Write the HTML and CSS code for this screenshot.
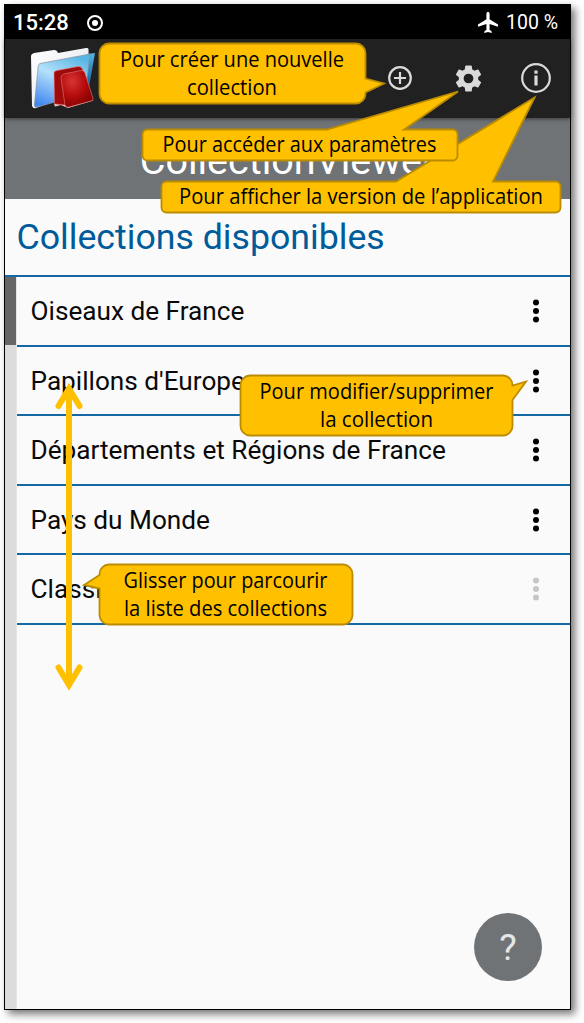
FILE: index.html
```html
<!DOCTYPE html>
<html lang="fr">
<head>
<meta charset="utf-8">
<title>CollectionViewer</title>
<link rel="stylesheet" href="styles.css">
</head>
<body>
<main class="phone">
  <header class="status">
    <span class="clock">15:28</span>
    <svg class="record" width="18" height="18" viewBox="0 0 18 18"><circle cx="9" cy="9" r="7" fill="none" stroke="#fff" stroke-width="2"/><circle cx="9" cy="9" r="3" fill="#fff"/></svg>
    <svg class="plane" width="20" height="21" viewBox="2 2 19 20" preserveAspectRatio="none"><path fill="#fff" d="M21 16v-2l-8-5V3.500c0-.83-.67-1.500-1.500-1.500S10 2.670 10 3.500V9l-8 5v2l8-2.500V19l-2 1.500V22l3.500-1 3.500 1v-1.500L13 19v-5.500z"/></svg>
    <span class="battery">100 %</span>
  </header>
  <nav class="appbar">
    <svg class="logo" width="66" height="64" viewBox="30 45 66 64">
      <defs>
        <linearGradient id="paper" x1="0" y1="0" x2="1" y2="1"><stop offset="0" stop-color="#fff"/><stop offset="1" stop-color="#dde3ea"/></linearGradient>
        <linearGradient id="folder" x1=".7" y1="0" x2=".2" y2="1"><stop offset="0" stop-color="#58b5e4"/><stop offset=".45" stop-color="#b5e1fa"/><stop offset="1" stop-color="#4388f0"/></linearGradient>
        <linearGradient id="edge" x1="0" y1="0" x2="0" y2="1"><stop offset="0" stop-color="#52b5e3"/><stop offset="1" stop-color="#125f9c"/></linearGradient>
        <radialGradient id="book" cx=".35" cy=".3" r=".8"><stop offset="0" stop-color="#d83535"/><stop offset=".5" stop-color="#b50b0b"/><stop offset="1" stop-color="#7c0000"/></radialGradient>
      </defs>
      <path fill="url(#paper)" d="M31 55q0-2 3-3l20-3q3 0 4 3l28-5q2-.5 2.500 1l.5 39-53 20q-3 1-4-2z"/>
      <path fill="url(#edge)" d="M87 53l8-1-6 34-5-3z"/>
      <path fill="url(#folder)" stroke="#87919b" stroke-width=".7" d="M40 62.500l50-9.500-5 40-48 13q-3 1-2.500-3l3.500-36q0-4 2-4.500z"/>
      <path fill="#f1d3d3" d="M54 103l9-3 6 4 22-6 2.500 1.500L68 107l-7-3-6 1.500z"/>
      <path fill="#9f0a0a" stroke="#ed7777" stroke-width=".6" d="M54 72q0-2 3-2.500l21-4q3-.5 4.500 2.500l6 26-24 10-10-1z"/>
      <path fill="url(#book)" stroke="#e47b7b" stroke-width=".6" d="M61 77.500q-.5-3.500 3-4.500l17-3.500q3-.5 4 2.500l8 25.500q1 2-2 2.500l-22 6q-3 1-4-2z"/>
    </svg>
    <div class="actions">
      <svg width="26" height="26" viewBox="0 0 26 26" fill="none" stroke="#dadada" stroke-width="2.200"><circle cx="13" cy="13" r="10.800"/><path d="M13 7v12M7 13h12"/></svg>
      <svg width="27" height="27" viewBox="2.200 2 19.600 20"><path fill="#dadada" d="M19.140 12.940c.04-.3.06-.61.06-.94 0-.32-.02-.64-.07-.94l2.030-1.580c.18-.14.23-.41.12-.61l-1.920-3.320c-.12-.22-.37-.29-.59-.22l-2.390.96c-.5-.38-1.030-.7-1.620-.94l-.36-2.540c-.04-.24-.24-.41-.48-.41h-3.840c-.24 0-.43.17-.47.41l-.36 2.540c-.59.24-1.130.57-1.620.94l-2.390-.96c-.22-.08-.47 0-.59.22L2.740 8.870c-.12.21-.08.47.12.61l2.030 1.580c-.05.3-.09.63-.09.94s.02.64.07.94l-2.030 1.580c-.18.14-.23.41-.12.61l1.920 3.320c.12.22.37.29.59.22l2.390-.96c.5.38 1.030.7 1.620.94l.36 2.540c.05.24.24.41.48.41h3.840c.24 0 .44-.17.47-.41l.36-2.540c.59-.24 1.130-.56 1.620-.94l2.390.96c.22.08.47 0 .59-.22l1.920-3.320c.12-.22.07-.47-.12-.61zM12 15.600a3.600 3.600 0 1 1 0-7.200 3.600 3.600 0 0 1 0 7.200z"/></svg>
      <svg width="32" height="32" viewBox="0 0 32 32"><circle cx="16" cy="16" r="13.800" fill="none" stroke="#dadada" stroke-width="2.200"/><path fill="#dadada" d="M14.400 8.500h3.200v3.200h-3.200zM14.400 13.500h3.200v10h-3.200z"/></svg>
    </div>
  </nav>
  <div class="titlebar">CollectionViewer</div>
  <h1 class="heading">Collections disponibles</h1>
  <section class="content">
    <div class="scrollbar"><div class="thumb"></div></div>
    <ul class="list">
      <li class="row"><span>Oiseaux de France</span><i class="dots"></i></li>
      <li class="row"><span>Papillons d'Europe</span><i class="dots"></i></li>
      <li class="row"><span>Départements et Régions de France</span><i class="dots"></i></li>
      <li class="row"><span>Pays du Monde</span><i class="dots"></i></li>
      <li class="row"><span>Classi</span><i class="dots disabled"></i></li>
    </ul>
  </section>
  <button class="help"><span>?</span></button>
</main>
<svg class="notes" width="584" height="1023" viewBox="0 0 584 1023">
  <g class="arrow"><path d="M69 394V680"/><path stroke-linecap="round" d="M58.500 406L69 388.500 79.500 406M58.500 667.500L69 685 79.500 667.500"/></g>
  <g class="bubble">
    <path d="M109 43.500H356a9.500 9.500 0 0 1 9.500 9.500V78.500L384 83.500 365.500 92.500V94a9.500 9.500 0 0 1-9.500 9.500H109a9.500 9.500 0 0 1-9.500-9.500V53a9.500 9.500 0 0 1 9.500-9.500z"/>
    <path d="M166.500 181.500H396L534.500 97.500 493 181.500H555.500a5 5 0 0 1 5 5V207.500a5 5 0 0 1-5 5H166.500a5 5 0 0 1-5-5V186.500a5 5 0 0 1 5-5z"/>
    <path d="M147.500 129.500H327L458 91.500 404 129.500H452.500a5 5 0 0 1 5 5V155.500a5 5 0 0 1-5 5H147.500a5 5 0 0 1-5-5V134.500a5 5 0 0 1 5-5z"/>
    <path d="M250 375.500H503a9.500 9.500 0 0 1 9.500 9.500V385.500L526 381.500 512.500 400V426a9.500 9.500 0 0 1-9.500 9.500H250a9.500 9.500 0 0 1-9.500-9.500V385a9.500 9.500 0 0 1 9.500-9.500z"/>
    <path d="M109 564.500H343a9.500 9.500 0 0 1 9.500 9.500V615a9.500 9.500 0 0 1-9.500 9.500H109a9.500 9.500 0 0 1-9.500-9.500V588.500L84 585 99.500 575V574a9.500 9.500 0 0 1 9.500-9.500z"/>
  </g>
  <g class="label">
    <text x="120" y="67" textLength="224" lengthAdjust="spacingAndGlyphs">Pour créer une nouvelle</text>
    <text x="187" y="95" textLength="90" lengthAdjust="spacingAndGlyphs">collection</text>
    <text x="162.500" y="152" textLength="274" lengthAdjust="spacingAndGlyphs">Pour accéder aux paramètres</text>
    <text x="179" y="204" textLength="364" lengthAdjust="spacingAndGlyphs">Pour afficher la version de l’application</text>
    <text x="259.500" y="399" textLength="234" lengthAdjust="spacingAndGlyphs">Pour modifier/supprimer</text>
    <text x="320" y="427" textLength="113" lengthAdjust="spacingAndGlyphs">la collection</text>
    <text x="123.500" y="588" textLength="204" lengthAdjust="spacingAndGlyphs">Glisser pour parcourir</text>
    <text x="124" y="616" textLength="203" lengthAdjust="spacingAndGlyphs">la liste des collections</text>
  </g>
</svg>
</body>
</html>
```
FILE: styles.css
```css
* { box-sizing: border-box; }
body { margin: 0; padding: 4px; width: 584px; height: 1023px; background: #fff; font-family: Roboto, sans-serif; overflow: hidden; }
.phone { position: relative; width: 567px; height: 1006px; border: 1px solid #000; background: #fafafa; box-shadow: 4px 4px 8px rgba(0,0,0,.55); display: flex; flex-direction: column; }
.status { height: 34px; flex: none; background: #000; color: #fff; display: flex; align-items: center; padding: 1px 12px 0 8px; }
.clock { font-size: 22px; font-weight: 500; width: 73px; }
.plane { margin-left: auto; }
.battery { font-size: 19.500px; margin-left: 8px; }
.appbar { position: relative; z-index: 1; height: 79px; flex: none; background: #212121; display: flex; align-items: center; padding: 0 18px 1px 25px; box-shadow: 0 1px 4px rgba(0,0,0,.5); }
.actions { margin-left: auto; display: flex; align-items: center; gap: 41.500px; }
.actions svg:last-child { margin-left: -3px; }
.titlebar { height: 81px; flex: none; background: #6f7376; color: #fff; font-size: 39.500px; line-height: 81px; padding-top: 2px; text-align: center; }
.heading { margin: 0; height: 78px; flex: none; border-bottom: 2px solid #1469a5; color: #005b9a; font-size: 35.700px; font-weight: 400; line-height: 76px; padding-left: 11.500px; }
.content { flex: 1; display: flex; min-height: 0; }
.scrollbar { width: 12px; background: #dcdcdc; border-right: 1px solid #e6e6e6; }
.thumb { height: 68px; width: 11px; background: #666; }
.list { flex: 1; list-style: none; margin: 0; padding: 0; }
.row { height: 69.500px; border-bottom: 2px solid #1469a5; display: flex; align-items: center; justify-content: space-between; padding: 1px 31px 0 13.500px; font-size: 26.200px; color: #0a0a0a; }
.dots { width: 6px; height: 6px; border-radius: 50%; background: #000; box-shadow: 0 -8.400px #000, 0 8.400px #000; }
.dots.disabled { background: #c6c6c6; box-shadow: 0 -8.400px #c6c6c6, 0 8.400px #c6c6c6; }
.help { position: absolute; right: 28px; bottom: 28px; width: 68px; height: 68px; border: 0; border-radius: 50%; background: #6f7376; color: #e6e6e6; font: 400 37px Roboto, sans-serif; padding: 0; }
.notes { position: absolute; left: 0; top: 0; z-index: 2; }
.arrow path { fill: none; stroke: #ffc000; stroke-width: 6; }
.bubble path { fill: #ffc000; stroke: #bc8c00; stroke-width: 1.800; }
.label { font: 21px "Open Sans", sans-serif; font-variant-ligatures: none; fill: #000; }
```
